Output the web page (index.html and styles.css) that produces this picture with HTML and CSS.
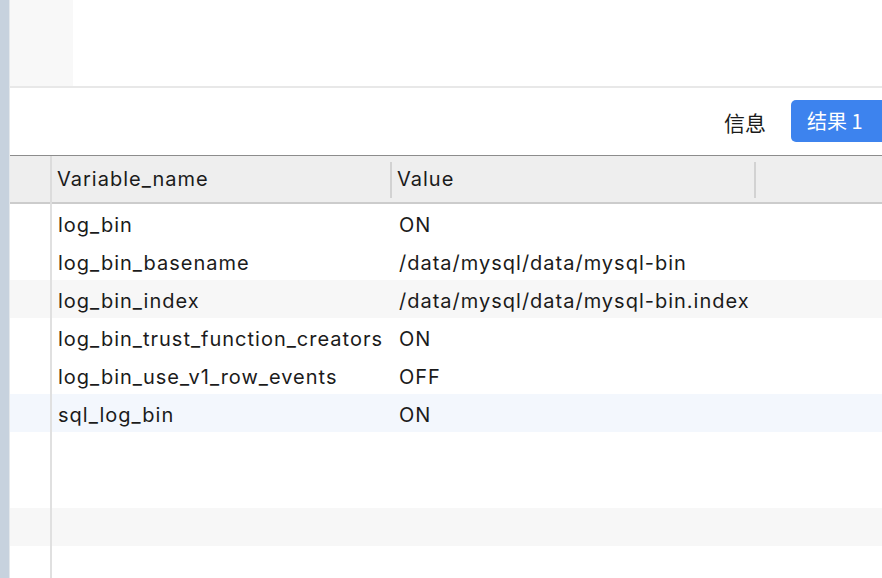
FILE: index.html
```html
<!DOCTYPE html>
<html>
<head>
<meta charset="utf-8">
<link rel="stylesheet" href="styles.css">
</head>
<body>
<div class="app">
  <div class="side"></div>
  <div class="main">
    <div class="top"><div class="top-box"></div></div>
    <div class="tabs">
      <span class="tab">信息</span>
      <span class="tab active">结果 1</span>
    </div>
    <div class="grid">
      <div class="row head">
        <div class="c0"></div>
        <div class="c1">Variable_name</div>
        <div class="c2">Value</div>
        <div class="c3"></div>
      </div>
      <div class="row"><div class="c0"></div><div class="c1">log_bin</div><div class="c2">ON</div><div class="c3"></div></div>
      <div class="row"><div class="c0"></div><div class="c1">log_bin_basename</div><div class="c2">/data/mysql/data/mysql-bin</div><div class="c3"></div></div>
      <div class="row stripe"><div class="c0"></div><div class="c1">log_bin_index</div><div class="c2">/data/mysql/data/mysql-bin.index</div><div class="c3"></div></div>
      <div class="row"><div class="c0"></div><div class="c1">log_bin_trust_function_creators</div><div class="c2">ON</div><div class="c3"></div></div>
      <div class="row"><div class="c0"></div><div class="c1">log_bin_use_v1_row_events</div><div class="c2">OFF</div><div class="c3"></div></div>
      <div class="row sel"><div class="c0"></div><div class="c1">sql_log_bin</div><div class="c2">ON</div><div class="c3"></div></div>
      <div class="row"><div class="c0"></div><div class="c1"></div><div class="c2"></div><div class="c3"></div></div>
      <div class="row"><div class="c0"></div><div class="c1"></div><div class="c2"></div><div class="c3"></div></div>
      <div class="row stripe"><div class="c0"></div><div class="c1"></div><div class="c2"></div><div class="c3"></div></div>
      <div class="row"><div class="c0"></div><div class="c1"></div><div class="c2"></div><div class="c3"></div></div>
    </div>
  </div>
</div>
</body>
</html>
```

FILE: styles.css
```css
html, body {
  margin: 0;
  padding: 0;
  background: #ffffff;
  overflow: hidden;
}
.app {
  display: flex;
  width: 882px;
  height: 578px;
  font-family: "Inter", "Liberation Sans", "Noto Sans CJK SC", sans-serif;
  color: #1b1b1b;
}
.side {
  width: 9px;
  flex: none;
  background: #c7d2de;
  border-right: 1px solid #e4e8ec;
}
.main {
  flex: 1;
  display: flex;
  flex-direction: column;
  min-width: 0;
}
.top {
  flex: none;
  height: 86px;
  border-bottom: 2px solid #e8e8e8;
  display: flex;
}
.top-box {
  width: 63px;
  background: #f8f8f8;
}
.tabs {
  flex: none;
  height: 67px;
  display: flex;
  align-items: center;
  justify-content: flex-end;
  gap: 25px;
}
.tab {
  font-family: "Noto Sans CJK SC", sans-serif;
  font-size: 21px;
  color: #1a1a1a;
}
.tab.active {
  background: #3d83ee;
  color: #ffffff;
  height: 42px;
  line-height: 42px;
  padding: 0 16px;
  border-radius: 5px 0 0 5px;
  margin-top: -2px;
  width: 59px;
  font-size: 20px;
}
.grid {
  display: flex;
  flex-direction: column;
  flex: none;
}
.row {
  flex: none;
  display: grid;
  grid-template-columns: 42px 340px 364px 1fr;
  height: 38px;
  align-items: stretch;
  font-size: 20px;
  letter-spacing: 1px;
}
.row > div {
  display: flex;
  align-items: center;
  white-space: nowrap;
  padding-top: 3px;
}
.c0 {
  border-right: 2px solid #e0e0e0;
}
.c1 {
  padding-left: 6px;
}
.c2 {
  padding-left: 7px;
}
.row.head {
  height: 46px;
  background: #eeeeee;
  border-top: 1px solid #8c8c8c;
  border-bottom: 2px solid #cccccc;
}
.row.head > div {
  padding-top: 0;
}
.row.head > .c1, .row.head > .c2 {
  padding-left: 5px;
  border-right: 2px solid #d2d2d2;
  margin: 6px 0;
  height: 34px;
  padding-bottom: 2px;
}
.row.head .c0 {
  border-right: 2px solid #dcdcdc;
}
.stripe {
  background: #f7f7f7;
}
.sel {
  background: #f3f7fd;
}
```
